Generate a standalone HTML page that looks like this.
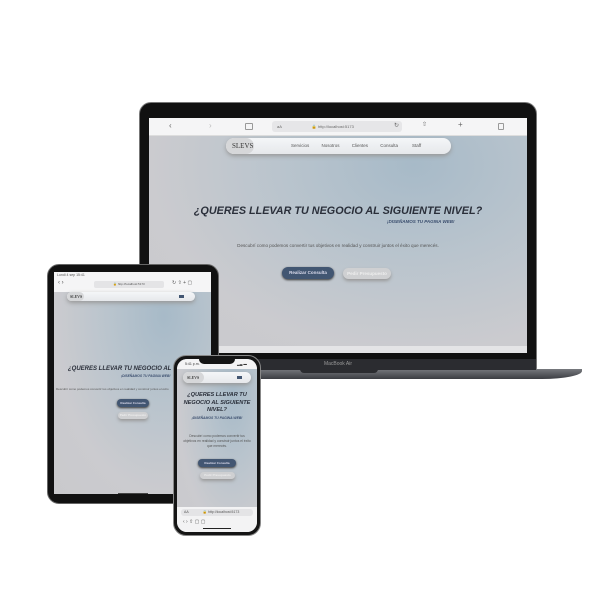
<!DOCTYPE html>
<html><head><meta charset="utf-8"><style>
*{margin:0;padding:0;box-sizing:border-box}
body{width:600px;height:600px;background:#fff;position:relative;overflow:hidden;font-family:"Liberation Sans",sans-serif}
.abs{position:absolute}
.scr{background:radial-gradient(ellipse at 70% 20%,#a7bac8 0%,#b9c4cd 35%,#cbcbcf 70%,#c9c9cc 100%)}
.h{font-weight:900;font-style:italic;color:#2a2f3a;text-align:center;letter-spacing:0}
.sub{font-weight:700;font-style:italic;color:#3b4e6e}
.p{color:#555;text-align:center}
.b1{background:#425672;color:#dde;border-radius:10px;text-align:center;font-weight:700;box-shadow:0 1px 2px #333}
.b2{background:#cfd0d2;color:#eee;border-radius:10px;text-align:center;font-weight:700;box-shadow:0 2px 3px #999}
.pill{background:linear-gradient(#f4f6f8,#e6e8eb);border-radius:12px;box-shadow:0 2px 4px #999}
</style></head><body>
<div class="abs" style="left:210px;top:369px;width:372px;height:10px;background:linear-gradient(#77797e,#3b3d42);border-radius:0 0 40px 14px/0 0 8px 8px"></div>
<div class="abs" style="left:300px;top:369px;width:78px;height:4px;background:#2b2c30;border-radius:0 0 4px 4px"></div>
<div class="abs" style="left:139px;top:102px;width:398px;height:268px;background:#111;border-radius:12px 12px 2px 2px;border:1px solid #777"></div>
<div class="abs" style="left:140px;top:359px;width:396px;height:11px;background:#2b2c30;color:#999;font-size:5px;text-align:center;line-height:11px">MacBook Air</div>
<div class="abs scr" style="left:149px;top:118px;width:378px;height:235px">
 <div class="abs" style="left:0;top:0;width:378px;height:18px;background:#f5f5f6;border-bottom:1px solid #ddd;font-size:6px;color:#666">
  <span class="abs" style="left:20px;top:3px;font-size:8px">‹</span><span class="abs" style="left:60px;top:3px;font-size:8px;color:#bbb">›</span>
  <div class="abs" style="left:96px;top:5px;width:8px;height:7px;border:1px solid #999;border-radius:1px"></div>
  <div class="abs" style="left:123px;top:3px;width:130px;height:11px;background:#e6e6e8;border-radius:3px;font-size:4px;line-height:11px;padding-left:5px">aA<span style="margin-left:30px">🔒 http://localhost:5173</span></div>
  <span class="abs" style="left:245px;top:4px">↻</span><span class="abs" style="left:273px;top:3px">⇧</span><span class="abs" style="left:309px;top:2px;font-size:8px">+</span>
  <div class="abs" style="left:349px;top:5px;width:6px;height:7px;border:1px solid #999;border-radius:1px"></div>
 </div>
 <div class="abs pill" style="left:77px;top:20px;width:225px;height:16px">
  <div class="abs" style="left:0;top:0;width:28px;height:16px;background:#d6d7d9;border-radius:8px;font-family:'Liberation Serif',serif;font-size:7px;line-height:16px;padding-left:6px;color:#333">SLEVS</div>
  <div class="abs" style="left:65px;top:0;font-size:4.5px;line-height:16px;color:#555;word-spacing:11px">Servicios Nosotros Clientes Consulta</div>
  <div class="abs" style="left:186px;top:0;font-size:4.5px;line-height:16px;color:#555">Staff</div>
 </div>
 <div class="abs h" style="left:0;top:87px;width:378px;font-size:10.8px">¿QUERES LLEVAR TU NEGOCIO AL SIGUIENTE NIVEL?</div>
 <div class="abs sub" style="left:238px;top:101px;font-size:4.5px">¡DISEÑAMOS TU PAGINA WEB!</div>
 <div class="abs p" style="left:0;top:125px;width:378px;font-size:4.6px">Descubrí como podemos convertir tus objetivos en realidad y construir juntos el éxito que merecés.</div>
 <div class="abs b1" style="left:133px;top:149px;width:52px;height:12px;font-size:4.5px;line-height:12px">Realizar Consulta</div>
 <div class="abs b2" style="left:194px;top:150px;width:48px;height:11px;font-size:4.5px;line-height:11px">Pedir Presupuesto</div>
 <div class="abs" style="left:0;top:228px;width:378px;height:7px;background:#e4e4e6"></div>
</div>
<div class="abs" style="left:47px;top:264px;width:172px;height:240px;background:#111;border-radius:12px;border:1px solid #666"></div>
<div class="abs scr" style="left:54px;top:272px;width:157px;height:222px;overflow:hidden">
 <div class="abs" style="left:0;top:0;width:157px;height:20px;background:#f5f5f6;font-size:3.5px;color:#555">
  <span class="abs" style="left:3px;top:1px">Lundi 4 sep 15:41</span>
  <span class="abs" style="left:4px;top:8px;font-size:6px">‹ ›</span>
  <div class="abs" style="left:40px;top:9px;width:70px;height:7px;background:#e4e4e6;border-radius:2px;font-size:3px;line-height:7px;text-align:center">🔒 http://localhost:5173</div>
  <span class="abs" style="left:118px;top:8px;font-size:5px">↻ ⇧ + ▢</span>
 </div>
 <div class="abs pill" style="left:13px;top:20px;width:128px;height:9px"><div class="abs" style="left:0;top:0;width:17px;height:9px;background:#d6d7d9;border-radius:5px;font-size:4px;line-height:9px;padding-left:3px;font-family:'Liberation Serif',serif">SLEVS</div><div class="abs" style="left:112px;top:3px;width:5px;height:3px;background:#425672"></div></div>
 <div class="abs h" style="left:14px;top:94px;width:170px;text-align:left;font-size:6px;white-space:nowrap">¿QUERES LLEVAR TU NEGOCIO AL SIGUIENTE</div>
 <div class="abs sub" style="left:67px;top:102px;font-size:3.3px">¡DISEÑAMOS TU PAGINA WEB!</div>
 <div class="abs p" style="left:2px;top:115px;width:170px;font-size:3px;text-align:left;white-space:nowrap">Descubrí como podemos convertir tus objetivos en realidad y construir juntos el éxito</div>
 <div class="abs b1" style="left:63px;top:127px;width:32px;height:8px;font-size:3px;line-height:8px">Realizar Consulta</div>
 <div class="abs b2" style="left:64px;top:140px;width:30px;height:7px;font-size:3px;line-height:7px">Pedir Presupuesto</div>
</div>
<div class="abs" style="left:118px;top:493px;width:30px;height:1px;background:#444"></div>
<div class="abs" style="left:173px;top:355px;width:88px;height:181px;background:#151515;border-radius:13px;border:1px solid #888"></div>
<div class="abs scr" style="left:177px;top:359px;width:80px;height:173px;border-radius:10px;overflow:hidden">
 <div class="abs" style="left:0;top:0;width:80px;height:10px;background:#f4f4f5;font-size:3.5px;color:#333"><span class="abs" style="left:8px;top:3px">5:41 p.m.</span><span class="abs" style="left:60px;top:3px">▂▃ ▬</span></div>
 <div class="abs" style="left:22px;top:0;width:36px;height:5px;background:#151515;border-radius:0 0 5px 5px"></div>
 <div class="abs pill" style="left:6px;top:13px;width:68px;height:11px"><div class="abs" style="left:0;top:0;width:21px;height:11px;background:#d6d7d9;border-radius:6px;font-size:4px;line-height:11px;padding-left:4px;font-family:'Liberation Serif',serif">SLEVS</div><div class="abs" style="left:54px;top:4px;width:5px;height:3px;background:#425672"></div></div>
 <div class="abs h" style="left:6px;top:33px;width:68px;font-size:5.6px;line-height:7.5px">¿QUERES LLEVAR TU NEGOCIO AL SIGUIENTE NIVEL?</div>
 <div class="abs sub" style="left:0;top:57px;width:80px;text-align:center;font-size:3.4px">¡DISEÑAMOS TU PAGINA WEB!</div>
 <div class="abs p" style="left:6px;top:75px;width:68px;font-size:3.3px;line-height:5px">Descubrí como podemos convertir tus objetivos en realidad y construir juntos el éxito que merecés.</div>
 <div class="abs b1" style="left:21px;top:100px;width:38px;height:8px;font-size:3px;line-height:8px">Realizar Consulta</div>
 <div class="abs b2" style="left:23px;top:113px;width:35px;height:7px;font-size:3px;line-height:7px">Pedir Presupuesto</div>
 <div class="abs" style="left:0;top:148px;width:80px;height:25px;background:#f3f3f4;font-size:3.5px;color:#555">
  <div class="abs" style="left:4px;top:2px;width:72px;height:7px;background:#e4e4e6;border-radius:3px;line-height:7px;padding-left:3px">AA<span style="margin-left:14px">🔒 http://localhost:5173</span></div>
  <span class="abs" style="left:6px;top:12px;font-size:5px">‹ › ⇧ ▢ ▢</span>
  <div class="abs" style="left:26px;top:21px;width:28px;height:1px;background:#222"></div>
 </div>
</div>
</body></html>
